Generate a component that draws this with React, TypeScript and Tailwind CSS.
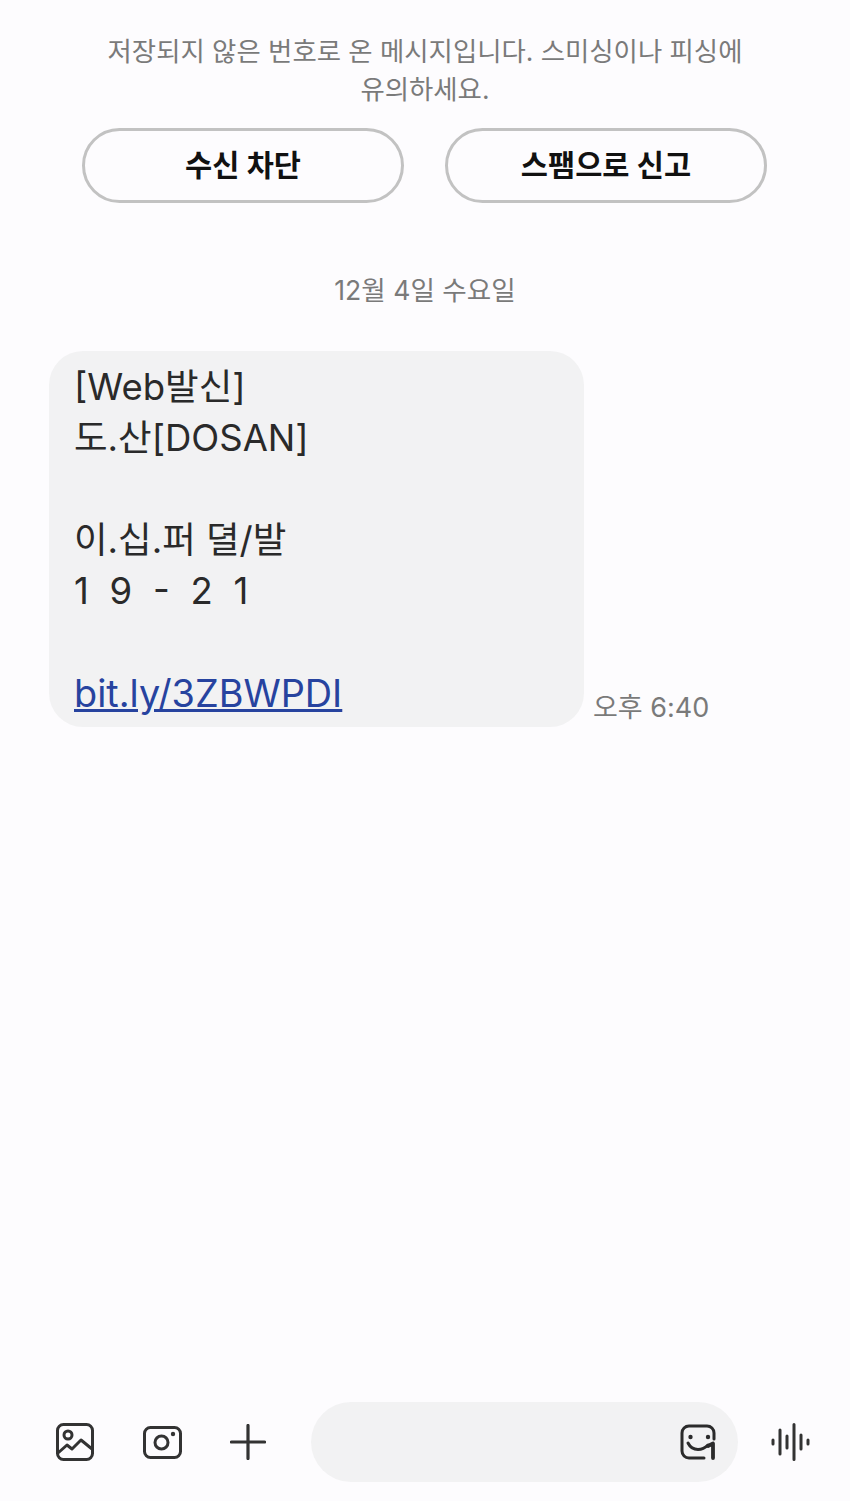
const font = { fontFamily: '"Inter", "Noto Sans CJK KR", sans-serif' };

const lines = ["[Web발신]", "도.산[DOSAN]", "", "이.십.퍼 뎔/발"];

function GalleryIcon() {
  return (
    <svg width="38" height="38" viewBox="0 0 38 38" fill="none" stroke="#333" strokeWidth="3" strokeLinecap="round" strokeLinejoin="round">
      <rect x="1.5" y="1.5" width="35" height="35" rx="6" />
      <circle cx="12" cy="12" r="4" />
      <path d="M2 30 L11 22 L16 26 L25 17 L36 26" />
    </svg>
  );
}

function CameraIcon() {
  return (
    <svg width="39" height="33" viewBox="0 0 39 33" fill="none" stroke="#333" strokeWidth="3">
      <rect x="1.5" y="1.5" width="36" height="30" rx="6" />
      <circle cx="18.5" cy="16.5" r="6.5" />
      <circle cx="30" cy="8" r="2.2" fill="#333" stroke="none" />
    </svg>
  );
}

function PlusIcon() {
  return (
    <svg width="36" height="36" viewBox="0 0 36 36" fill="none" stroke="#333" strokeWidth="3.2" strokeLinecap="round">
      <path d="M18 1.5V34.5M1.5 18H34.5" />
    </svg>
  );
}

function StickerIcon() {
  return (
    <svg width="36" height="36" viewBox="0 0 36 36" fill="none" stroke="#2b2b2b" strokeWidth="3" strokeLinecap="round" strokeLinejoin="round">
      <path d="M24 34H9a7 7 0 0 1-7-7V9a7 7 0 0 1 7-7h18a7 7 0 0 1 7 7v6" />
      <circle cx="10.5" cy="13" r="2.2" fill="#2b2b2b" stroke="none" />
      <circle cx="28" cy="13" r="2.2" fill="#2b2b2b" stroke="none" />
      <path d="M8 19c2 4 5.500 6.500 10 6.500 3.500 0 7-1.500 10-4.500" />
      <path d="M28 22l5-2.500V34" strokeWidth="3.800" />
    </svg>
  );
}

function VoiceIcon() {
  return (
    <svg width="40" height="38" viewBox="0 0 40 38" fill="none" stroke="#333" strokeWidth="3" strokeLinecap="round">
      <path d="M2 17v4M9 7v24M16 13v12M23 1.500v35M30 12v14M37 17v4" />
    </svg>
  );
}

export default function App() {
  return (
    <div className="flex h-[1501px] w-[850px] flex-col bg-[#fdfcfe]" style={font}>
      <p className="mt-[32px] text-center text-[26.4px] leading-[38px] text-[#7a7a7a]">
        저장되지 않은 번호로 온 메시지입니다. 스미싱이나 피싱에
        <br />
        유의하세요.
      </p>

      <div className="mt-[20px] flex gap-[41px] px-[82px]">
        <button className="h-[75px] w-[322px] rounded-full border-[3px] border-[#c2c2c2] text-[29.5px] font-semibold text-[#111]">
          수신 차단
        </button>
        <button className="h-[75px] w-[322px] rounded-full border-[3px] border-[#c2c2c2] text-[29.5px] font-semibold text-[#111]">
          스팸으로 신고
        </button>
      </div>

      <p className="mt-[68px] text-center text-[26.6px] leading-[38px] text-[#7a7a7a]">12월 4일 수요일</p>

      <div className="mt-[42px] flex items-end px-[49px]">
        <div className="h-[376px] w-[535px] rounded-[34px] bg-[#f2f2f3] px-[25px] pt-[11px] text-[36.5px] leading-[51px] text-[#2a2a2a]">
          {lines.map((line, i) => (
            <div key={i} className="h-[51px]">
              {line}
            </div>
          ))}
          <div className="h-[51px] [word-spacing:10.5px]">1 9 - 2 1</div>
          <div className="h-[51px]" />
          <a className="text-[37.8px] text-[#27439f] underline">bit.ly/3ZBWPDI</a>
        </div>
        <span className="ml-[9px] text-[27px] leading-[38px] text-[#7a7a7a]">오후 6:40</span>
      </div>

      <div className="mt-auto mb-[19px] flex h-[80px] items-center">
        <div className="ml-[56px] flex w-[38px] justify-center"><GalleryIcon /></div>
        <div className="ml-[49px] flex w-[39px] justify-center"><CameraIcon /></div>
        <div className="ml-[48px] flex w-[36px] justify-center"><PlusIcon /></div>
        <div className="ml-[45px] flex h-[80px] w-[427px] items-center justify-end rounded-full bg-[#f2f2f3] pr-[22px]">
          <StickerIcon />
        </div>
        <div className="ml-[33px]"><VoiceIcon /></div>
      </div>
    </div>
  );
}
